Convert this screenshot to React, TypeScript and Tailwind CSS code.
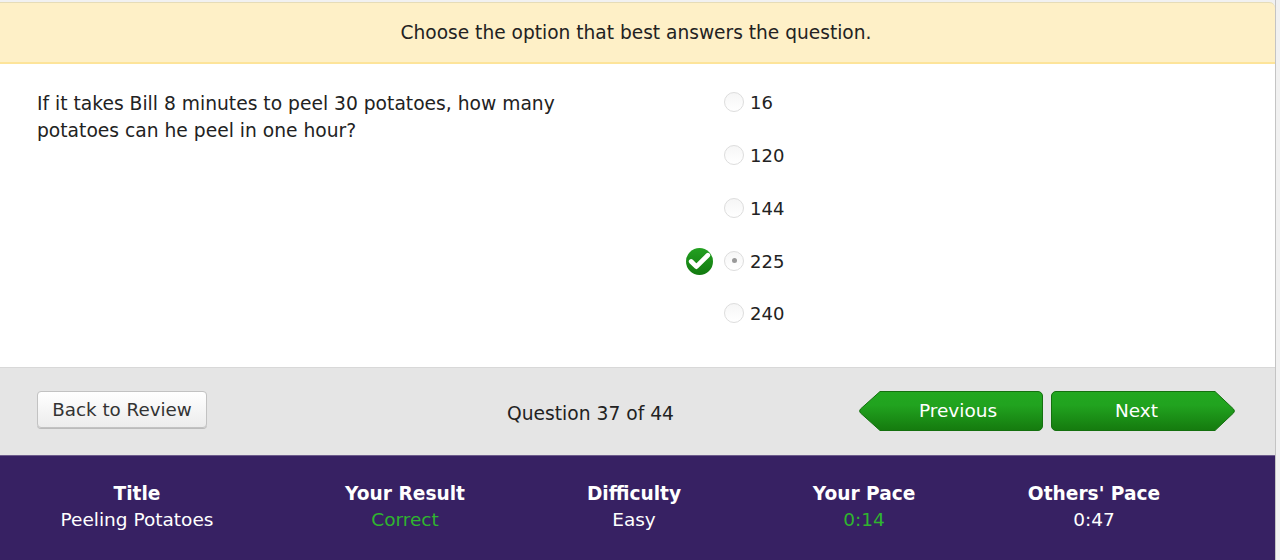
import { Check } from "lucide-react";

const options = ["16", "120", "144", "225", "240"];
const stats = [
  { label: "Title", value: "Peeling Potatoes", color: "text-white", width: "w-[274px]" },
  { label: "Your Result", value: "Correct", color: "text-[#2fb52f]", width: "w-[262px]" },
  { label: "Difficulty", value: "Easy", color: "text-white", width: "w-[196px]" },
  { label: "Your Pace", value: "0:14", color: "text-[#2fb52f]", width: "w-[264px]" },
  { label: "Others' Pace", value: "0:47", color: "text-white", width: "w-[196px]" },
];

function ArrowButton({ label, dir }: { label: string; dir: "left" | "right" }) {
  const id = `grad-${dir}`;
  const d =
    dir === "left"
      ? "M21 0.5H179a4.500 4.500 0 0 1 4.500 4.500V35a4.500 4.500 0 0 1-4.500 4.500H21L1.500 22a3 3 0 0 1 0-4z"
      : "M5 0.5H164L182.500 18a3 3 0 0 1 0 4L164 39.500H5A4.500 4.500 0 0 1 0.500 35V5A4.500 4.500 0 0 1 5 0.500z";
  return (
    <button className={`relative w-[184px] h-10 text-white text-[18.5px] leading-10 ${dir === "left" ? "pl-[14px]" : "pr-[13px]"}`}>
      <svg className="absolute inset-0" width="184" height="40" viewBox="0 0 184 40">
        <defs>
          <linearGradient id={id} x1="0" y1="0" x2="0" y2="1">
            <stop offset="0" stopColor="#22a820" />
            <stop offset="0.35" stopColor="#21a31f" />
            <stop offset="1" stopColor="#157a0e" />
          </linearGradient>
        </defs>
        <path d={d} fill={`url(#${id})`} stroke="#14700f" strokeWidth="1" />
      </svg>
      <span className="relative">{label}</span>
    </button>
  );
}

export default function App() {
  return (
    <div className="w-[1280px] h-[560px] overflow-hidden bg-[#f1f1f1] font-['DejaVu_Sans','Liberation_Sans',sans-serif] text-[18.5px] text-[#222]">
      <div className="w-[1276px] h-[560px] pt-0.5 border-r border-[#c4c4c4]">
        {/* Instructions */}
        <div className="h-[62px] bg-[#fef0c7] border-t border-b-2 border-t-[#e6dcb8] border-b-[#fde49a] rounded-tr-md flex items-center justify-center pt-px">
          <span className="text-[18.6px] -ml-[3px]">Choose the option that best answers the question.</span>
        </div>

        {/* Question */}
        <div className="h-[303px] bg-white flex pl-[37px]">
          <p className="w-[640px] pt-[26px] leading-[27px] text-[18.7px]">
            If it takes Bill 8 minutes to peel 30 potatoes, how many
            <br />
            potatoes can he peel in one hour?
          </p>
          <div className="pt-[12px]">
            {options.map((opt) => (
              <div key={opt} className="h-[52.75px] flex items-center text-[18px]">
                <div className="w-[47px] flex justify-start">
                  {opt === "225" && (
                    <span className="w-[27px] h-[27px] ml-[9px] mt-[2px] rounded-full bg-gradient-to-b from-[#23a021] to-[#127a10] flex items-center justify-center">
                      <Check size={25} strokeWidth={4.5} className="text-white shrink-0" />
                    </span>
                  )}
                </div>
                <span className="w-[20px] h-[20px] mr-[6px] rounded-full border border-[#ddd] bg-gradient-to-b from-[#f6f6f6] to-white flex items-center justify-center">
                  {opt === "225" && <span className="w-[5px] h-[5px] rounded-full bg-[#999]" />}
                </span>
                <span className="pt-px">{opt}</span>
              </div>
            ))}
          </div>
        </div>

        {/* Nav bar */}
        <div className="h-[88px] bg-[#e5e5e5] border-t border-[#d8d8d8] flex items-center pl-[37px]">
          <button className="w-[170px] h-[37px] -mt-[4px] rounded border border-[#c2c2c2] bg-gradient-to-b from-white to-[#ececec] shadow-[0_1px_0_#bbb] text-[18.3px] text-[#333]">
            Back to Review
          </button>
          <div className="w-[652px] mt-[5px] flex justify-center pl-[115px]">
            <span className="text-[18.7px]">Question 37 of 44</span>
          </div>
          <div className="flex gap-2 -mt-[2px]">
            <ArrowButton label="Previous" dir="left" />
            <ArrowButton label="Next" dir="right" />
          </div>
        </div>

        {/* Stats */}
        <div className="h-[105px] bg-[#372163] border-t border-[#6d5c8c] flex pt-[25px] text-center">
          {stats.map((s) => (
            <div key={s.label} className={s.width}>
              <div className="font-bold text-white leading-[26px] text-[18.6px]">{s.label}</div>
              <div className={`${s.color} leading-[26px]`}>{s.value}</div>
            </div>
          ))}
        </div>
      </div>
    </div>
  );
}
